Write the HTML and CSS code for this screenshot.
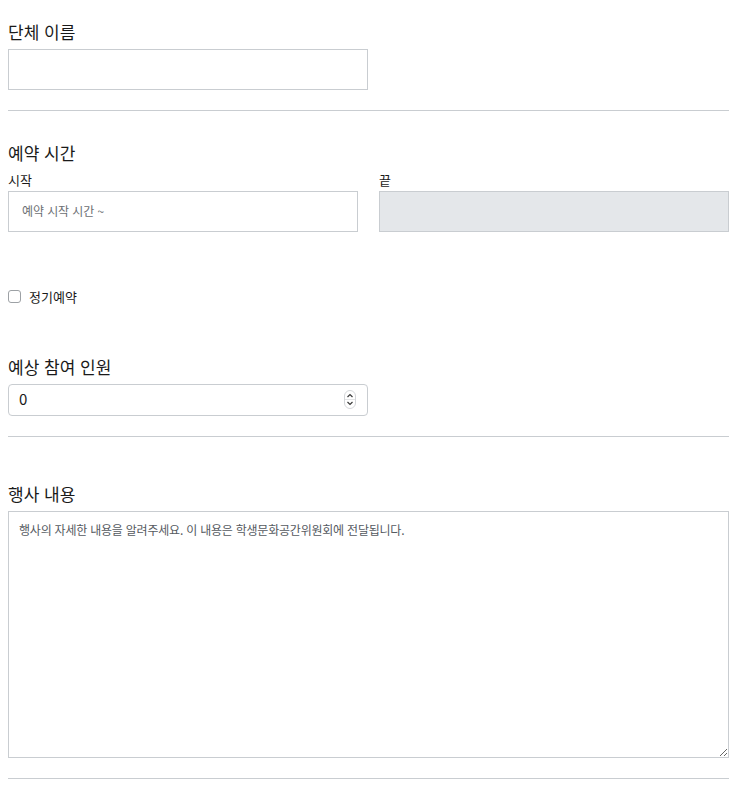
FILE: index.html
```html
<!DOCTYPE html>
<html lang="ko">
<head>
<meta charset="utf-8">
<link rel="stylesheet" href="styles.css">
</head>
<body>
<form class="form">
  <section class="sec sec-first">
    <div class="title">단체 이름</div>
    <input class="box name-input" type="text">
  </section>
  <hr class="rule">
  <section class="sec sec-time">
    <div class="title">예약 시간</div>
    <div class="time-row">
      <div class="time-col">
        <div class="sub">시작</div>
        <input class="box time-input" type="text" placeholder="예약 시작 시간 ~">
      </div>
      <div class="time-col">
        <div class="sub">끝</div>
        <input class="box time-input disabled" type="text" disabled>
      </div>
    </div>
  </section>
  <label class="check-row"><span class="check"></span><span>정기예약</span></label>
  <section class="sec sec-people">
    <div class="title">예상 참여 인원</div>
    <div class="num-wrap">
      <input class="num-input" type="number" value="0">
      <svg class="spin" width="12" height="19" viewBox="0 0 12 19" aria-hidden="true">
        <rect x="0.5" y="0.5" width="11" height="18" rx="5.5" fill="#fff" stroke="#d4d6d9"/>
        <line x1="1" y1="9.5" x2="11" y2="9.5" stroke="#e3e4e6"/>
        <path d="M3.5 7 L6 4.5 L8.5 7" fill="none" stroke="#3a3a3a" stroke-width="1.2"/>
        <path d="M3.5 12 L6 14.5 L8.5 12" fill="none" stroke="#3a3a3a" stroke-width="1.2"/>
      </svg>
    </div>
  </section>
  <hr class="rule">
  <section class="sec sec-content">
    <div class="title">행사 내용</div>
    <textarea class="box content-area" placeholder="행사의 자세한 내용을 알려주세요. 이 내용은 학생문화공간위원회에 전달됩니다."></textarea>
  </section>
  <hr class="rule">
</form>
</body>
</html>
```
FILE: styles.css
```css
html, body {
  margin: 0;
  padding: 0;
  background: #fff;
}
body {
  padding: 8px;
  font-family: "Noto Sans CJK KR", "Noto Sans", sans-serif;
  color: #212529;
}
.form {
  width: 721px;
  display: flex;
  flex-direction: column;
}
.sec {
  display: flex;
  flex-direction: column;
}
.sec-first { padding-top: 12px; }
.title {
  font-size: 17px;
  line-height: 24px;
  margin-bottom: 5px;
  color: #1a1a1a;
}
.box {
  box-sizing: border-box;
  border: 1px solid #c9cdd1;
  border-radius: 0;
  background: #fff;
  font-family: "Noto Sans CJK KR", sans-serif;
  outline: none;
}
.name-input {
  width: 360px;
  height: 41px;
  margin: 0;
}
.rule {
  margin: 20px 0 0;
  border: 0;
  border-top: 1px solid #c9cdd1;
  height: 0;
}
.sec-time { padding-top: 30px; }
.sec-time .title { margin-bottom: 6px; }
.time-row {
  display: flex;
  gap: 21px;
}
.time-col {
  flex: 1;
  display: flex;
  flex-direction: column;
}
.sub {
  font-size: 13px;
  line-height: 18px;
  margin-bottom: 2px;
  color: #1a1a1a;
}
.time-input {
  width: 100%;
  height: 41px;
  padding: 0 13px 2px;
  font-size: 12px;
  letter-spacing: -0.1px;
  margin: 0;
}
.time-input::placeholder { color: #6c6f73; }
.time-input.disabled { background: #e4e7ea; }
.check-row {
  display: flex;
  align-items: center;
  gap: 8px;
  margin-top: 54px;
  height: 20px;
  font-size: 13px;
  color: #1a1a1a;
}
.check {
  box-sizing: border-box;
  width: 13px;
  height: 13px;
  border: 1px solid #9da1a5;
  border-radius: 3px;
  background: #fff;
}
.sec-people { padding-top: 49px; }
.num-wrap {
  position: relative;
  width: 360px;
  height: 32px;
}
.num-input {
  box-sizing: border-box;
  width: 360px;
  height: 32px;
  border: 1px solid #c9cdd1;
  border-radius: 4px;
  padding: 0 10px 3px;
  font-size: 15px;
  font-family: "Noto Sans CJK KR", sans-serif;
  color: #1a1a1a;
  margin: 0;
  outline: none;
  display: block;
  -moz-appearance: textfield;
}
.num-input::-webkit-inner-spin-button,
.num-input::-webkit-outer-spin-button {
  -webkit-appearance: none;
  margin: 0;
}
.spin {
  position: absolute;
  right: 12px;
  top: 6px;
}
.sec-content { padding-top: 45px; }
.content-area {
  width: 721px;
  height: 247px;
  padding: 9px 10px 10px;
  font-size: 12px;
  letter-spacing: -0.22px;
  resize: vertical;
  margin: 0;
  display: block;
}
.content-area::placeholder { color: #555a5f; }
```
